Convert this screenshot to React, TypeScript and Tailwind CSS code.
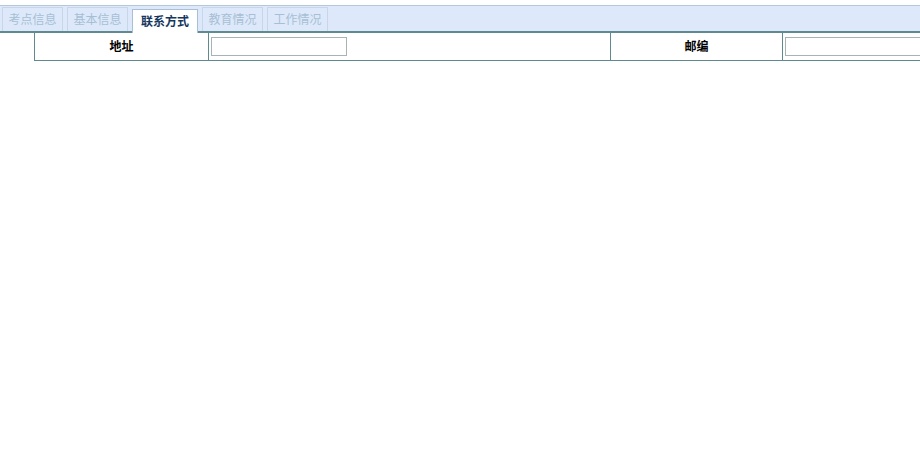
import React from "react";

const tabs = ["考点信息", "基本信息", "联系方式", "教育情况", "工作情况"];

export default function App() {
  return (
    <div
      className="w-[920px] h-[450px] bg-white overflow-hidden text-[12px]"
      style={{ fontFamily: '"Liberation Sans", "Noto Sans CJK SC", sans-serif' }}
    >
      <div className="h-[5px]" />
      <div className="flex items-end gap-[4px] h-[28px] pl-[2px] bg-[#dde9fa] border-t border-[#b4c8dc] border-b-2 border-b-[#5f8a8f]">
        {tabs.map((t, i) =>
          i === 2 ? (
            <div
              key={t}
              className="w-[66px] h-[24px] -mb-[2px] flex items-center justify-center bg-white border border-[#a9bfd6] border-b-0 font-bold text-[#15375e]"
            >
              {t}
            </div>
          ) : (
            <div
              key={t}
              className="w-[61px] h-[24px] flex items-center justify-center border border-[#c7d7e8] border-b-0 text-[#a7bfd4]"
            >
              {t}
            </div>
          )
        )}
      </div>
      <div className="flex ml-[34px] w-[900px] h-[28px] border border-t-0 border-[#5f8a8f]">
        <div className="w-[174px] flex items-center justify-center font-bold text-black border-r border-[#5f8a8f]">
          地址
        </div>
        <div className="w-[402px] flex items-center pl-[2px] border-r border-[#5f8a8f]">
          <input className="w-[136px] h-[19px] border border-[#a8b4b4] bg-white outline-none" />
        </div>
        <div className="w-[172px] flex items-center justify-center font-bold text-black border-r border-[#5f8a8f]">
          邮编
        </div>
        <div className="flex-1 flex items-center pl-[2px]">
          <input className="w-[140px] h-[19px] border border-[#a8b4b4] bg-white outline-none" />
        </div>
      </div>
    </div>
  );
}
